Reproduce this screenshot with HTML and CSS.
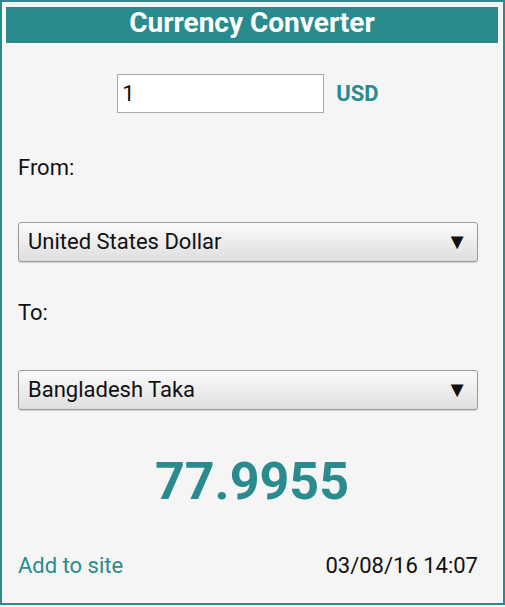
FILE: index.html
```html
<!DOCTYPE html>
<html lang="en">
<head>
    <meta charset="UTF-8">
    <meta name="viewport" content="width=device-width, initial-scale=1.0">
    <title>Currency Converter</title>
    <link rel="stylesheet" href="styles.css">
</head>
<body>
    <div class="widget">
        <h1 class="title">Currency Converter</h1>

        <div class="content">
            <div class="amount-row">
                <input type="text" class="amount" value="1" aria-label="Amount">
                <span class="code">USD</span>
            </div>

            <label class="field-label">From:</label>
            <div class="select-wrap">
                <div class="select">United States Dollar</div>
                <span class="arrow">&#9660;</span>
            </div>

            <label class="field-label to">To:</label>
            <div class="select-wrap second">
                <div class="select">Bangladesh Taka</div>
                <span class="arrow">&#9660;</span>
            </div>
        </div>

        <div class="result">77.9955</div>

        <div class="content footer">
            <a href="#" class="add-link">Add to site</a>
            <span class="updated">03/08/16 14:07</span>
        </div>
    </div>
</body>
</html>
```

FILE: styles.css
```css
body {
    margin: 0;
    font-family: Roboto, "Liberation Sans", sans-serif;
    color: #111;
}

.widget {
    box-sizing: border-box;
    width: 505px;
    height: 605px;
    border: 2px solid #298b8e;
    background: #f5f5f5;
    padding: 5px 5px 0 4px;
}

.title {
    margin: 0;
    height: 36px;
    line-height: 32px;
    background: #298b8e;
    color: white;
    font-size: 28px;
    font-weight: bold;
    text-align: center;
}

.content {
    padding: 0 20px 0 12px;
}

.amount-row {
    display: flex;
    justify-content: center;
    align-items: center;
    gap: 12px;
    margin-top: 31px;
}

.amount {
    box-sizing: border-box;
    width: 207px;
    height: 39px;
    margin: 0;
    padding: 0 4px;
    border: 1px solid #aaa;
    background: white;
    font-family: inherit;
    font-size: 22px;
    color: #111;
}

.code {
    color: #298b8e;
    font-size: 22px;
    font-weight: bold;
}

.field-label {
    display: block;
    margin-top: 43px;
    font-size: 22px;
    line-height: 24px;
}

.field-label.to {
    margin-top: 39px;
}

.select-wrap {
    position: relative;
    margin-top: 42px;
}

.select-wrap.second {
    margin-top: 45px;
}

.select {
    box-sizing: border-box;
    height: 40px;
    line-height: 38px;
    padding: 0 40px 0 9px;
    border: 1px solid #9a9a9a;
    border-radius: 3px;
    background: linear-gradient(#fbfbfb, #dedede);
    box-shadow: 0 1px 1px rgba(0, 0, 0, 0.15);
    font-size: 22px;
}

.arrow {
    position: absolute;
    right: 10px;
    top: 9px;
    font-size: 22px;
    line-height: 22px;
}

.result {
    margin-top: 42px;
    height: 60px;
    line-height: 60px;
    text-align: center;
    color: #298b8e;
    font-size: 52px;
    font-weight: bold;
}

.footer {
    display: flex;
    justify-content: space-between;
    margin-top: 42px;
    font-size: 22px;
    line-height: 24px;
}

.add-link {
    color: #298b8e;
    text-decoration: none;
}
```
